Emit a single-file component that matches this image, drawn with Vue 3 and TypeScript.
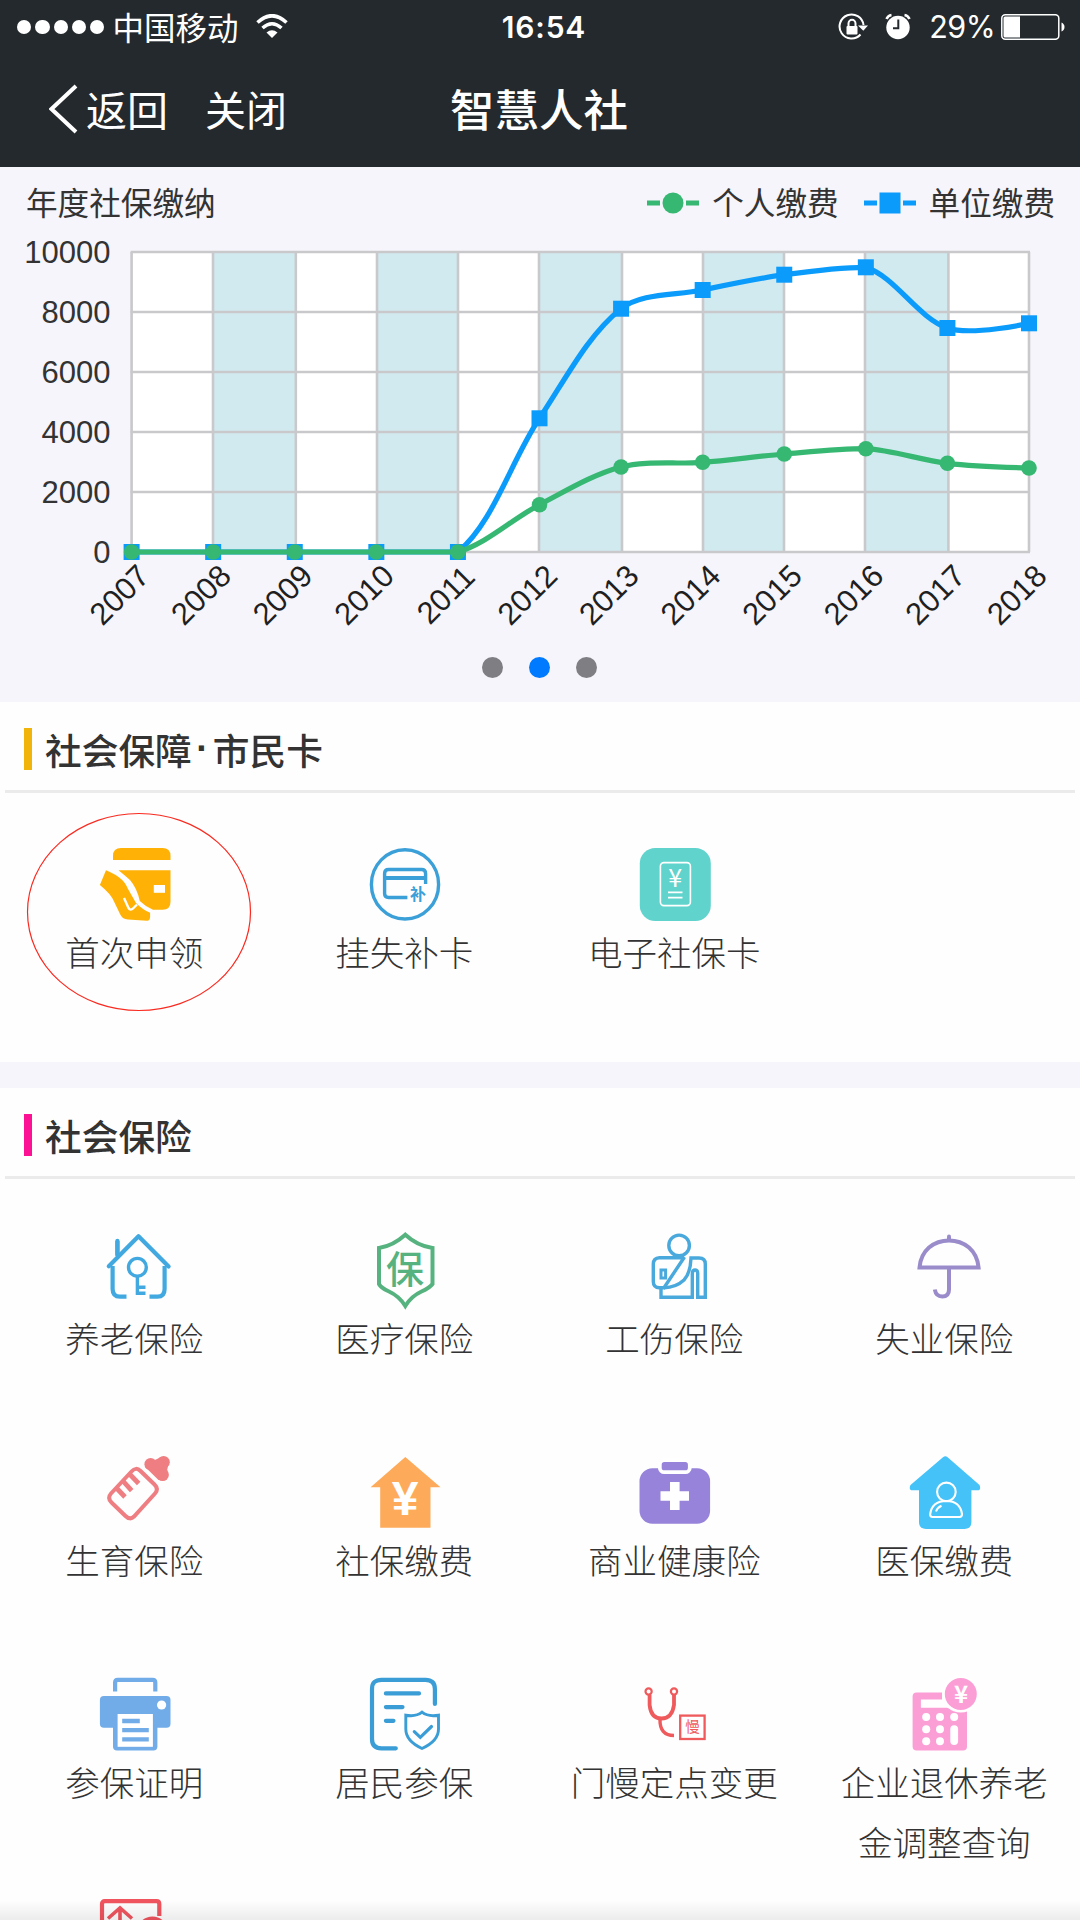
<script setup lang="ts">
interface Series {
  name: string
  color: string
  symbol: 'circle' | 'rect'
  ys: number[]
}

interface Service {
  label: string[]
  icon: string
  marked?: boolean
}

interface Section {
  title: string[]
  accent: string
  services: Service[]
}

type Point = [number, number]

const years = Array.from({ length: 12 }, (_, i) => 2007 + i)
const left = 131.6
const right = 1029
const bottom = 385
const step = (right - left) / 11
const xs = years.map((_, i) => left + i * step)
const gridX = [131.6, 213, 295.8, 377, 458, 539, 622, 703, 784, 865, 948.4, 1029]
const yTicks = [10000, 8000, 6000, 4000, 2000, 0].map((value, i) => ({ value, y: 85 + i * 60 }))
const bands = [1, 3, 5, 7, 9].map((i) => ({ x: gridX[i], width: gridX[i + 1] - gridX[i] }))

const unit: Series = {
  name: '单位缴费',
  color: '#0a9bfb',
  symbol: 'rect',
  ys: [385, 385, 385, 385, 385, 251.3, 141.7, 123, 107.7, 100.3, 161, 156.3],
}
const personal: Series = {
  name: '个人缴费',
  color: '#36b873',
  symbol: 'circle',
  ys: [385, 385, 385, 385, 385, 337.7, 300, 295.3, 287, 281.7, 296.3, 301],
}
const series = [unit, personal]

// Bezier smoothing whose control points stay inside the bounds of the series
function smoothPath(ys: number[], smooth = 0.33): string {
  const pts: Point[] = ys.map((y, i) => [xs[i], y])
  const min = Math.min(...ys)
  const max = Math.max(...ys)
  const clamp = (y: number) => Math.min(max, Math.max(min, y))
  let out: Point = pts[0]
  let d = `M${pts[0][0]} ${pts[0][1]}`
  for (let i = 1; i < pts.length; i++) {
    const p = pts[i]
    const prev = pts[i - 1]
    const next = pts[i + 1]
    let into: Point = p
    let leaving: Point = p
    if (next) {
      const vx = next[0] - prev[0]
      const vy = next[1] - prev[1]
      const a = Math.hypot(p[0] - prev[0], p[1] - prev[1])
      const b = Math.hypot(p[0] - next[0], p[1] - next[1])
      const r = b / (a + b)
      into = [p[0] - vx * smooth * (1 - r), clamp(p[1] - vy * smooth * (1 - r))]
      leaving = [p[0] + vx * smooth * r, clamp(p[1] + vy * smooth * r)]
    }
    d += `C${out[0]} ${out[1]} ${into[0]} ${into[1]} ${p[0]} ${p[1]}`
    out = leaving
  }
  return d
}

const cjk = `font-family="'Noto Sans CJK SC', sans-serif" text-anchor="middle"`

const icons: Record<string, string> = {
  apply: `<g fill="#ffb205"><path d="M14 12V8Q14 0 22 0H63.500Q71.500 0 71.500 8V12Z"/>
    <path d="M19.500 22.300H71.500V54Q71.500 61.700 63.500 61.700H54Q47 59 40.800 53Q38 40 31 32Q27 28.500 19.500 22.300Z"/>
    <path d="M7 22.300Q17 26.500 22 31Q26 34 29 41L37 55Q44 62 51.100 64.800V69Q51 72.800 48 72.700L29 71.500Q23 71 21 66L15 53.500Q12 46 .9 37Z"/></g>
    <path d="M54.800 37H66V44.800H54.800Z" fill="#fff"/><path d="M25 50L29.500 60Q31.500 63 34 60.500L38 56.500" fill="none" stroke="#fff" stroke-width="2.400"/>`,
  reissue: `<g fill="none" stroke="#3b9fd8" stroke-width="3.400"><ellipse cx="36" cy="36.400" rx="33.600" ry="34.600"/>
    <path d="M56.600 36V25.500Q56.600 21.500 52.600 21.500H19.600Q15.600 21.500 15.600 25.500V45.500Q15.600 49.500 19.600 49.500H38.400"/><path d="M15.600 30H56.600" stroke-width="4"/></g>
    <text x="49" y="51.800" font-size="16" font-weight="700" fill="#3b9fd8" ${cjk}>补</text>`,
  ecard: `<rect x=".8" width="71" height="73" rx="15.500" fill="#61d3cd"/><rect x="21.400" y="14.600" width="30" height="43" rx="3.500" fill="none" stroke="#fff" stroke-width="1.600"/>
    <text x="36.300" y="38.700" font-size="25" fill="#fff" ${cjk}>¥</text><path d="M29 44.300H43.500M29 49.700H43.500" stroke="#fff" stroke-width="1.700"/>`,
  pension: `<g fill="none" stroke="#42a8e0" stroke-width="4.200" stroke-linecap="round" stroke-linejoin="round"><path d="M9.800 32.200L39.500 2.300L69.600 32.500" />
    <path d="M13.600 32V55Q13.600 62.700 21 62.700H27.500M65.600 32V55Q65.600 62.700 58.500 62.700H50.500M18.400 7V22" stroke-linecap="butt"/><path d="M18.400 6.800V20"/></g>
    <g fill="none" stroke="#42a8e0" stroke-width="3.400"><circle cx="38.400" cy="33.300" r="8.900"/><path d="M38.400 42V59.300H46.500M38.400 53.300H46.500"/></g>`,
  medical: `<path d="M36.300 .8Q24 12 10 14V50Q12 54 20 57.500Q30 62 36.300 72Q42.500 62 52.500 57.500Q60.500 54 63.500 50V14Q48.500 12 36.300 .8Z" fill="none" stroke="#56b37f" stroke-width="4"/>
    <text x="36" y="49.300" font-size="38" font-weight="500" fill="#56b37f" ${cjk}>保</text>`,
  injury: `<g fill="none" stroke="#4aa9dc" stroke-width="3.400"><ellipse cx="40.100" cy="11.400" rx="10.300" ry="10.300"/>
    <path d="M45 23.700H20.500Q14.300 24 14.300 30V47.500Q14.300 53.700 20.500 53.700H25L45.500 23"/><path d="M25 53.700Q37 53.500 45 46Q51.500 39 52 24H60Q66.300 24 66.300 30V63.300H58.700V39Q58.500 36 56 36Q53.300 36 53.300 40V63.300H22V54"/>
    <rect x="22" y="36" width="4.600" height="8" stroke-width="3"/></g>`,
  umbrella: `<g fill="none" stroke="#9a8bcb" stroke-width="4"><path d="M10.500 33.600Q11.500 21 20 13.500Q28.500 6.500 40 6.500Q51.500 6.500 60 13.500Q68.500 21 69.600 33.600Z"/>
    <path d="M40 34V55.500Q40 62.500 33.200 62.500Q27 62.500 25.800 55.500"/><path d="M40 2.500V6" stroke-linecap="round"/></g>`,
  bottle: `<g fill="none" stroke="#ef7e82" stroke-width="4"><path d="M32.500 15.500Q37 10.500 41.500 15L55.500 28.500Q60 33 56 37.500L35 60.500Q31 64.500 26.500 60L12.500 46.500Q8 42 12 37.500Z"/>
    <path d="M17 31.500L26 41M23.500 24.500L32.700 34.700M30.500 18L39.700 27.500" stroke-width="4.800"/></g>
    <g fill="#ef7e82"><circle cx="51.600" cy="8.200" r="6.200"/><circle cx="64.600" cy="6.200" r="6.200"/><circle cx="63.600" cy="18.800" r="6.300"/><path d="M46.200 11L59.500 24L68 15L69 10L62 1L56 4Z"/></g>`,
  pay: `<path d="M36.300 .9L71.500 31.200H61.500V71.700H11.200V31.200H1.600Z" fill="#fdab5b"/>
    <text x="36.200" y="59" font-size="48" font-weight="700" fill="#fff" font-family="'Liberation Sans', Arial, sans-serif" text-anchor="middle">¥</text>`,
  health: `<rect x=".5" y="12.200" width="70.600" height="55.500" rx="13" fill="#9783da"/><rect x="20.800" y="4.200" width="30" height="12" rx="4.500" fill="#9783da" stroke="#fff" stroke-width="3.800"/>
    <path d="M35.800 26V54M21.500 40H50" stroke="#fff" stroke-width="9.600"/>`,
  mpay: `<path d="M34 1.200Q36.300 -.5 38.600 1.200L70.500 29Q72.500 34.300 68.500 34.300H62.400V66Q62.400 72.900 55.500 72.900H17Q10 72.900 10 66V34.300H3.500Q-.7 34 1.500 29Z" fill="#45c2f8"/>
    <g fill="none" stroke="#fff" stroke-width="2.100"><circle cx="37.400" cy="35.900" r="9.300"/><path d="M23.500 61H50.500Q53 61 53 58Q51 45 37.400 45Q23 45 21.200 58Q21 61 23.500 61ZM27 55.500Q28.500 51.500 32.500 49.800"/></g>`,
  printer: `<g fill="#71ace9"><rect x=".9" y="18" width="70.600" height="31.700" rx="4"/><rect x="14" y="32" width="44.400" height="40.400" rx="4"/></g>
    <path d="M16.100 13.500V4.500Q16.100 1.900 18.700 1.900H53.700Q56.300 1.900 56.300 4.500V13.500" fill="none" stroke="#71ace9" stroke-width="4.200"/>
    <circle cx="62.600" cy="27" r="4.600" fill="#fff"/><rect x="18.600" y="36" width="35.300" height="32.800" fill="#fff"/><path d="M23.200 43H40.800M23.200 52.200H49.800M23.200 61.400H49.800" stroke="#71ace9" stroke-width="4.300"/>`,
  resident: `<g fill="none" stroke="#3b9dd6" stroke-width="4.200" stroke-linecap="round"><path d="M65.900 26V11Q65.900 1.800 56.500 1.800H12.500Q3 1.800 3 11V61Q3 70.300 12.500 70.300H26.800"/>
    <path d="M16.900 15.400H50M16.900 29.100H33.500M16.900 42.800H24.500"/><path d="M36.800 37.200Q47 39 53 34.200Q59 39 69.500 37.200V51Q69.500 63 53 70.500Q36.800 63 36.800 51Z" stroke-width="2.900" stroke-linecap="butt"/>
    <path d="M45.300 53.700L51.300 59.300L62.500 48.500" stroke-width="3.200"/></g>`,
  steth: `<g fill="none" stroke="#ef5a5c" stroke-width="3.800"><circle cx="9.600" cy="13.500" r="3.100" stroke-width="2.200"/><circle cx="35" cy="13.500" r="3.100" stroke-width="2.200"/>
    <path d="M10.600 17V27Q12 40.500 22.500 40.500Q33 40.500 35 27V17"/><path d="M21 41Q20.500 57.500 35 57.500" stroke-width="3.400"/><rect x="41.200" y="37.600" width="24.400" height="23.400" stroke-width="2.300"/></g>
    <text x="53.400" y="54.200" font-size="14.500" fill="#ef5a5c" ${cjk}>慢</text>`,
  calc: `<rect x="3.600" y="14.400" width="54.400" height="58" rx="4" fill="#fc9ed6"/><path d="M11.900 21.400H33V14H60V33H47L38 29.700H11.900Z" fill="#fff"/>
    <g fill="#fff"><circle cx="17.200" cy="39" r="4"/><circle cx="31" cy="39" r="4"/><circle cx="45.200" cy="39" r="4"/><circle cx="17.200" cy="51.300" r="4"/><circle cx="31" cy="51.300" r="4"/><circle cx="17.200" cy="63.200" r="4"/><circle cx="31" cy="63.200" r="4"/><rect x="41.300" y="47.300" width="7.800" height="19.600" rx="3.900"/></g>
    <circle cx="51.800" cy="16" r="17.300" fill="#fc9ed6" stroke="#fff" stroke-width="2.600"/><text x="52" y="24.600" font-size="24" font-weight="700" fill="#fff" ${cjk}>¥</text>`,
  transfer: `<g fill="none" stroke="#f0545e" stroke-width="4.200"><path d="M3 40V5Q3 2.200 5.800 2.200H57.500Q60.300 2.200 60.300 5V17"/><path d="M9 19.500L21 9L33 19.500M21 9V40" stroke-width="3.600"/><circle cx="53.500" cy="33" r="13.500"/></g>`,
}

const sections: Section[] = [
  {
    title: ['社会保障', '市民卡'],
    accent: 'gold',
    services: [
      { label: ['首次申领'], icon: 'apply', marked: true },
      { label: ['挂失补卡'], icon: 'reissue' },
      { label: ['电子社保卡'], icon: 'ecard' },
    ],
  },
  {
    title: ['社会保险'],
    accent: 'pink',
    services: [
      { label: ['养老保险'], icon: 'pension' },
      { label: ['医疗保险'], icon: 'medical' },
      { label: ['工伤保险'], icon: 'injury' },
      { label: ['失业保险'], icon: 'umbrella' },
      { label: ['生育保险'], icon: 'bottle' },
      { label: ['社保缴费'], icon: 'pay' },
      { label: ['商业健康险'], icon: 'health' },
      { label: ['医保缴费'], icon: 'mpay' },
      { label: ['参保证明'], icon: 'printer' },
      { label: ['居民参保'], icon: 'resident' },
      { label: ['门慢定点变更'], icon: 'steth' },
      { label: ['企业退休养老', '金调整查询'], icon: 'calc' },
      { label: [], icon: 'transfer' },
    ],
  },
]
</script>

<template>
  <div class="screen">
    <header class="header">
      <div class="status">
        <div class="carrier">
          <span class="signal"><i v-for="n in 5" :key="n"></i></span>
          <span class="operator">中国移动</span>
          <svg class="wifi" width="32" height="25" viewBox="0 0 32 25">
            <path d="M1.500 8.500Q16 -5 30.500 8.500" fill="none" stroke="#fff" stroke-width="3.600" />
            <path d="M6.500 14Q16 5.500 25.500 14" fill="none" stroke="#fff" stroke-width="3.500" />
            <path d="M10.500 18.500Q16 14 21.500 18.500L16 24Z" fill="#fff" />
          </svg>
        </div>
        <span class="clock">16:54</span>
        <div class="power">
          <svg width="30" height="28" viewBox="0 0 30 28">
            <path d="M22.500 21.500A12 12 0 1 1 25.500 12" fill="none" stroke="#fff" stroke-width="2" />
            <path d="M20 12.500H30L25.300 17.800Z" fill="#fff" />
            <rect x="8.500" y="13" width="11" height="8.500" rx="1" fill="#fff" />
            <path d="M10.500 14V10.500A3.500 3.800 0 0 1 17.500 10.500V14" fill="none" stroke="#fff" stroke-width="2" />
          </svg>
          <svg class="alarm" width="26" height="28" viewBox="0 0 26 28">
            <circle cx="13" cy="14.500" r="11.700" fill="#fff" />
            <path d="M1.500 6Q3 2.500 6.500 2M24.500 6Q23 2.500 19.500 2" fill="none" stroke="#fff" stroke-width="2.600" />
            <path d="M13.300 6.500V15.200H8" fill="none" stroke="#23292c" stroke-width="2" />
          </svg>
          <span class="percent">29%</span>
          <svg class="battery" width="64" height="26" viewBox="0 0 64 26">
            <rect x=".8" y=".8" width="57" height="24.400" rx="3.500" fill="none" stroke="#fff" stroke-width="1.500" />
            <path d="M2.500 4Q2.500 2.500 4 2.500H19V23.500H4Q2.500 23.500 2.500 22Z" fill="#fff" />
            <path d="M60.500 8.500Q63.500 10 63.500 13Q63.500 16 60.500 17.500Z" fill="#fff" />
          </svg>
        </div>
      </div>
      <nav class="nav">
        <svg class="chevron" width="30" height="50" viewBox="0 0 30 50">
          <path d="M27 2L2.500 25L27 48" fill="none" stroke="#fff" stroke-width="4" />
        </svg>
        <span class="back">返回</span>
        <span class="close">关闭</span>
        <h1>智慧人社</h1>
      </nav>
    </header>

    <section class="chart">
      <div class="chart-head">
        <span>年度社保缴纳</span>
        <div class="legend">
          <div v-for="s in [personal, unit]" :key="s.name" class="legend-item">
            <svg width="52" height="22" viewBox="0 0 52 22" :fill="s.color">
              <path d="M0 8.500H13V13.500H0ZM39 8.500H52V13.500H39Z" />
              <circle v-if="s.symbol === 'circle'" cx="26" cy="11" r="10.500" />
              <rect v-else x="15.500" y=".5" width="21" height="21" />
            </svg>
            <span>{{ s.name }}</span>
          </div>
        </div>
      </div>
      <svg class="plot" width="1080" height="535" viewBox="0 0 1080 535">
        <rect :x="left" y="85" :width="right - left" height="300" fill="#fff" />
        <rect v-for="b in bands" :key="b.x" :x="b.x" y="85" :width="b.width" height="300" fill="#d1eaf0" />
        <g stroke="#c9c9cb" stroke-width="2.600">
          <line v-for="t in yTicks" :key="t.value" :x1="left - 1" :x2="right + 1" :y1="t.y" :y2="t.y" />
          <line v-for="x in gridX" :key="x" :x1="x" :x2="x" y1="85" :y2="bottom" />
        </g>
        <g class="y-labels">
          <text v-for="t in yTicks" :key="t.value" x="110.500" :y="t.y + 10.500">{{ t.value }}</text>
        </g>
        <g class="x-labels">
          <text v-for="(year, i) in years" :key="year" :transform="`translate(${xs[i] - 12.5} 427.500) rotate(-45)`" y="11">{{ year }}</text>
        </g>
        <g v-for="s in series" :key="s.name" :fill="s.color">
          <path :d="smoothPath(s.ys)" fill="none" :stroke="s.color" stroke-width="5.200" />
          <template v-for="(y, i) in s.ys" :key="i">
            <circle v-if="s.symbol === 'circle'" :cx="xs[i]" :cy="y" r="7.800" />
            <rect v-else :x="xs[i] - 8" :y="y - 8" width="16" height="16" />
          </template>
        </g>
      </svg>
      <div class="pager"><i></i><i class="active"></i><i></i></div>
    </section>

    <section v-for="section in sections" :key="section.accent" class="block">
      <div class="block-head">
        <i :class="['accent', section.accent]"></i>
        <h2>
          <template v-for="(part, i) in section.title" :key="part">
            <span v-if="i > 0" class="middot">·</span>
            <span>{{ part }}</span>
          </template>
        </h2>
      </div>
      <div class="grid">
        <div v-for="service in section.services" :key="service.icon" class="cell">
          <svg class="icon" width="72" height="74" viewBox="0 0 72 74" v-html="icons[service.icon]"></svg>
          <div class="labels">
            <span v-for="line in service.label" :key="line" class="label">{{ line }}</span>
          </div>
          <svg v-if="service.marked" class="mark" width="226" height="200" viewBox="0 0 226 200">
            <ellipse cx="113" cy="100" rx="111.500" ry="98.500" fill="none" stroke="#fa2a20" stroke-width="1.200" />
          </svg>
        </div>
      </div>
    </section>
    <div class="fade"></div>
  </div>
</template>

<style>
body {
  margin: 0;
  background: #fff;
}
</style>

<style scoped>
.screen {
  position: relative;
  width: 1080px;
  height: 1920px;
  overflow: hidden;
  background: #f6f5fb;
  color: #333;
  font-family: 'Noto Sans CJK SC', sans-serif;
}
.header {
  box-sizing: border-box;
  height: 167px;
  background: #23292c;
  color: #fff;
}
.status {
  display: grid;
  grid-template-columns: 1fr auto 1fr;
  align-items: center;
  height: 54px;
}
.carrier,
.signal,
.power {
  display: flex;
  align-items: center;
}
.signal {
  gap: 4px;
  margin-left: 17px;
}
.signal i {
  width: 14.300px;
  height: 14.300px;
  border-radius: 50%;
  background: #fff;
}
.operator {
  margin: -3px 0 0 8px;
  font-size: 31.500px;
  line-height: 54px;
}
.wifi {
  margin: -2px 0 0 17px;
}
.clock {
  font: 600 30px/54px Inter, sans-serif;
  letter-spacing: 0.800px;
  margin-left: 8px;
}
.power {
  justify-content: flex-end;
  margin: -1px 15px 0 0;
}
.alarm {
  margin-left: 17px;
}
.percent {
  margin-left: 18px;
  font: 400 30.500px/54px Inter, sans-serif;
  letter-spacing: -0.600px;
}
.battery {
  margin-left: 6px;
}
.nav {
  position: relative;
  display: flex;
  align-items: center;
  height: 110px;
  padding-left: 49px;
  font-size: 41px;
}
.back {
  margin: -3px 0 0 7px;
}
.close {
  margin: -3px 0 0 37px;
}
.nav h1 {
  position: absolute;
  top: 0;
  left: 0;
  width: 1078px;
  margin: 0;
  text-align: center;
  font-size: 44.500px;
  font-weight: 500;
  line-height: 108px;
}
.chart {
  position: relative;
  height: 535px;
}
.chart-head {
  display: flex;
  justify-content: space-between;
  height: 72px;
  padding: 0 25px 0 26px;
  font-size: 31.600px;
  line-height: 68px;
}
.legend {
  display: flex;
  gap: 25px;
}
.legend-item {
  display: flex;
  align-items: center;
  height: 72px;
  gap: 13px;
}
.legend-item span {
  margin-top: -4px;
}
.plot {
  position: absolute;
  top: 0;
  left: 0;
}
.y-labels,
.x-labels {
  font-family: 'Liberation Sans', Arial, sans-serif;
  font-size: 31px;
  fill: #333;
}
.y-labels {
  text-anchor: end;
}
.x-labels {
  text-anchor: middle;
  fill: #1f1f22;
}
.pager {
  display: flex;
  justify-content: center;
  gap: 26px;
  padding: 418px 1px 0 0;
}
.pager i {
  width: 21px;
  height: 21px;
  border-radius: 50%;
  background: #7f7e83;
}
.pager .active {
  background: #007aff;
}
.block {
  height: 359.500px;
  margin-bottom: 26.500px;
  background: #fefefe;
}
.block:nth-of-type(3) {
  height: 900px;
  margin: 0;
}
.block-head {
  box-sizing: border-box;
  display: flex;
  align-items: center;
  height: 91px;
  margin: 0 5px;
  padding: 2px 0 0 18.500px;
  border-bottom: 3px solid #ebebec;
}
.accent {
  width: 8px;
  height: 42px;
  margin-top: 3px;
}
.gold {
  background: #f0b40a;
}
.pink {
  background: #fc1195;
}
h2 {
  display: flex;
  margin: 3px 0 0 13.500px;
  font-size: 36.700px;
  font-weight: 500;
  line-height: 60px;
}
.middot {
  margin: 0 4.400px;
  font-family: 'Liberation Sans', Arial, sans-serif;
  font-weight: 700;
}
.grid {
  display: grid;
  grid-template-columns: repeat(4, 270px);
  grid-auto-rows: 221.800px;
  padding-top: 55px;
}
.cell {
  position: relative;
  display: flex;
  flex-direction: column;
  align-items: center;
}
.icon {
  flex: none;
  overflow: visible;
}
.labels {
  display: flex;
  flex-direction: column;
  align-items: center;
  margin-top: -1px;
  padding-right: 1.600px;
}
.label {
  font-size: 34.500px;
  font-weight: 300;
  line-height: 60px;
  white-space: nowrap;
}
.mark {
  position: absolute;
  left: 26px;
  top: -36px;
}
.fade {
  position: absolute;
  left: 0;
  right: 0;
  bottom: 0;
  height: 20px;
  background: linear-gradient(rgba(0, 0, 0, 0), rgba(0, 0, 0, 0.070));
}
</style>
